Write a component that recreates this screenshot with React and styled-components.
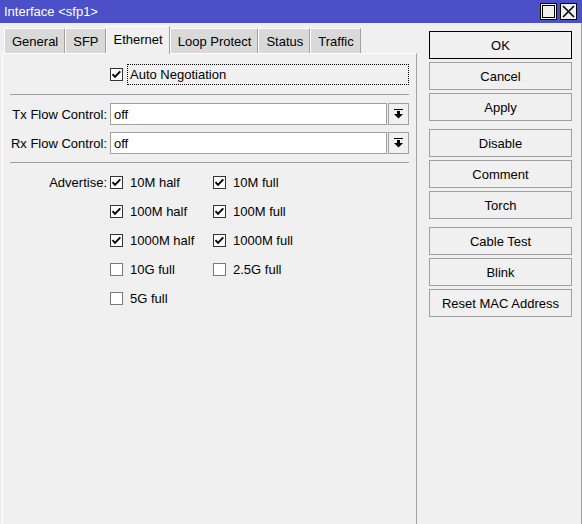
import React from "react"
import styled, { createGlobalStyle, css } from "styled-components"

const GlobalStyle = createGlobalStyle`
  html, body {
    margin: 0;
    padding: 0;
    background: #f0f0f0;
  }
  body {
    font-family: "Liberation Sans", Arial, sans-serif;
    font-size: 13px;
    color: #000;
  }
`

const Window = styled.div`
  width: 582px;
  height: 524px;
  display: flex;
  flex-direction: column;
  background: #f0f0f0;
  overflow: hidden;
`

const TitleBar = styled.div`
  height: 23px;
  flex: none;
  display: flex;
  align-items: center;
  justify-content: space-between;
  padding: 0 5px 0 4px;
  background: #4b50c8;
  color: #fff;
`

const Title = styled.span`
  font-size: 13px;
  line-height: 23px;
`

const TitleButtons = styled.div`
  display: flex;
  gap: 3px;
`

const TitleButton = styled.div`
  width: 17px;
  height: 17px;
  box-sizing: border-box;
  border: 1px solid #000;
  background: #f0f0f0;
  display: flex;
  align-items: center;
  justify-content: center;
`

const Main = styled.div`
  flex: 1;
  display: flex;
  border-right: 1px solid #a0a0a0;
`

const LeftPane = styled.div`
  width: 417px;
  flex: none;
  padding-left: 2px;
  box-sizing: border-box;
  display: flex;
  flex-direction: column;
`

const TabBar = styled.div`
  height: 30px;
  flex: none;
  display: flex;
  align-items: flex-end;
  padding-left: 2px;
`

const Tab = styled.div`
  height: 25px;
  box-sizing: border-box;
  padding: 0 6px 0 7px;
  display: flex;
  align-items: center;
  background: #d9d9d9;
  border-top: 1px solid #fff;
  border-left: 1px solid #fff;
  border-right: 1px solid #a0a0a0;
  white-space: nowrap;

  ${({ $active }) =>
    $active &&
    css`
      height: 28px;
      margin-bottom: -1px;
      padding-bottom: 2px;
      background: #f0f0f0;
      position: relative;
      z-index: 1;
    `}
`

const Panel = styled.div`
  flex: 1;
  border-top: 1px solid #fff;
  border-left: 1px solid #fff;
  border-right: 1px solid #a0a0a0;
  padding: 10px 7px 0 0;
  display: flex;
  flex-direction: column;
`

const CheckRow = styled.div`
  display: flex;
  align-items: center;
  padding-left: 107px;
  height: 21px;
`

const FocusLabel = styled.span`
  flex: 1;
  height: 21px;
  box-sizing: border-box;
  margin-left: 4px;
  padding-left: 2px;
  border: 1px dotted #000;
  display: flex;
  align-items: center;
`

const Separator = styled.div`
  height: 1px;
  background: #a0a0a0;
  margin: ${({ $top }) => $top}px 0 ${({ $bottom }) => $bottom}px 7px;
`

const FieldRow = styled.div`
  display: grid;
  grid-template-columns: 104px 1fr;
  column-gap: 3px;
  align-items: center;
  margin-bottom: ${({ $gap }) => $gap || 0}px;
`

const Label = styled.label`
  text-align: right;
  white-space: nowrap;
  align-self: ${({ $top }) => ($top ? "start" : "center")};
  line-height: ${({ $top }) => ($top ? "29px" : "normal")};
`

const Combo = styled.div`
  display: flex;
  height: 22px;
  gap: 1px;
`

const ComboInput = styled.div`
  flex: 1;
  box-sizing: border-box;
  border: 1px solid #a0a0a0;
  background: #fff;
  padding-left: 3px;
  display: flex;
  align-items: center;
`

const ComboButton = styled.div`
  width: 21px;
  box-sizing: border-box;
  border: 1px solid #a0a0a0;
  background: #f0f0f0;
  display: flex;
  align-items: center;
  justify-content: center;
`

const CheckGrid = styled.div`
  display: grid;
  grid-template-columns: 103px 1fr;
  grid-auto-rows: 29px;
`

const CheckItem = styled.div`
  display: flex;
  align-items: center;
  gap: 7px;
  white-space: nowrap;
`

const Box = styled.span`
  width: 13px;
  height: 13px;
  box-sizing: border-box;
  flex: none;
  border: 1px solid ${({ $checked }) => ($checked ? "#333" : "#7a7a7a")};
  background: #fff;
  display: flex;
  align-items: center;
  justify-content: center;
`

const RightPane = styled.div`
  flex: 1;
  padding: 8px 9px 0 12px;
  display: flex;
  flex-direction: column;
  gap: 8px;
`

const ButtonGroup = styled.div`
  display: flex;
  flex-direction: column;
  gap: 3px;
`

const Button = styled.div`
  height: 28px;
  box-sizing: border-box;
  border: 1px solid ${({ $default }) => ($default ? "#000" : "#a0a0a0")};
  background: #f0f0f0;
  display: flex;
  align-items: center;
  justify-content: center;
  white-space: nowrap;
`

const CheckMark = () => (
  <svg width="11" height="11" viewBox="0 0 11 11">
    <path d="M1.5 5.2 L4 7.8 L9.3 2.3" fill="none" stroke="#000" strokeWidth="1.9" />
  </svg>
)

const Checkbox = ({ checked }) => (
  <Box $checked={checked}>{checked && <CheckMark />}</Box>
)

const DropArrow = () => (
  <svg width="9" height="10" viewBox="0 0 9 10">
    <rect x="0" y="0" width="9" height="1" fill="#000" />
    <rect x="3" y="2" width="3" height="3" fill="#000" />
    <path d="M0 5 H9 L4.5 9.5 Z" fill="#000" />
  </svg>
)

const ComboField = ({ label, value, gap }) => (
  <FieldRow $gap={gap}>
    <Label>{label}</Label>
    <Combo>
      <ComboInput>{value}</ComboInput>
      <ComboButton>
        <DropArrow />
      </ComboButton>
    </Combo>
  </FieldRow>
)

const tabs = ["General", "SFP", "Ethernet", "Loop Protect", "Status", "Traffic"]

const advertise = [
  ["10M half", true],
  ["10M full", true],
  ["100M half", true],
  ["100M full", true],
  ["1000M half", true],
  ["1000M full", true],
  ["10G full", false],
  ["2.5G full", false],
  ["5G full", false],
]

const buttonGroups = [
  ["OK", "Cancel", "Apply"],
  ["Disable", "Comment", "Torch"],
  ["Cable Test", "Blink", "Reset MAC Address"],
]

const App = () => (
  <>
    <GlobalStyle />
    <Window>
      <TitleBar>
        <Title>Interface &lt;sfp1&gt;</Title>
        <TitleButtons>
          <TitleButton>
            <svg width="13" height="13" viewBox="0 0 13 13">
              <rect x="0.5" y="0.5" width="12" height="12" fill="none" stroke="#000" />
            </svg>
          </TitleButton>
          <TitleButton>
            <svg width="13" height="13" viewBox="0 0 13 13">
              <path d="M1 1 L12 12 M12 1 L1 12" stroke="#000" strokeWidth="1.6" />
            </svg>
          </TitleButton>
        </TitleButtons>
      </TitleBar>
      <Main>
        <LeftPane>
          <TabBar>
            {tabs.map((t) => (
              <Tab key={t} $active={t === "Ethernet"}>
                {t}
              </Tab>
            ))}
          </TabBar>
          <Panel>
            <CheckRow>
              <Checkbox checked />
              <FocusLabel>Auto Negotiation</FocusLabel>
            </CheckRow>
            <Separator $top={9} $bottom={8} />
            <ComboField label="Tx Flow Control:" value="off" gap={7} />
            <ComboField label="Rx Flow Control:" value="off" />
            <Separator $top={8} $bottom={5} />
            <FieldRow>
              <Label $top>Advertise:</Label>
              <CheckGrid>
                {advertise.map(([name, on]) => (
                  <CheckItem key={name}>
                    <Checkbox checked={on} />
                    {name}
                  </CheckItem>
                ))}
              </CheckGrid>
            </FieldRow>
          </Panel>
        </LeftPane>
        <RightPane>
          {buttonGroups.map((group, i) => (
            <ButtonGroup key={i}>
              {group.map((b) => (
                <Button key={b} $default={b === "OK"}>
                  {b}
                </Button>
              ))}
            </ButtonGroup>
          ))}
        </RightPane>
      </Main>
    </Window>
  </>
)

export default App
